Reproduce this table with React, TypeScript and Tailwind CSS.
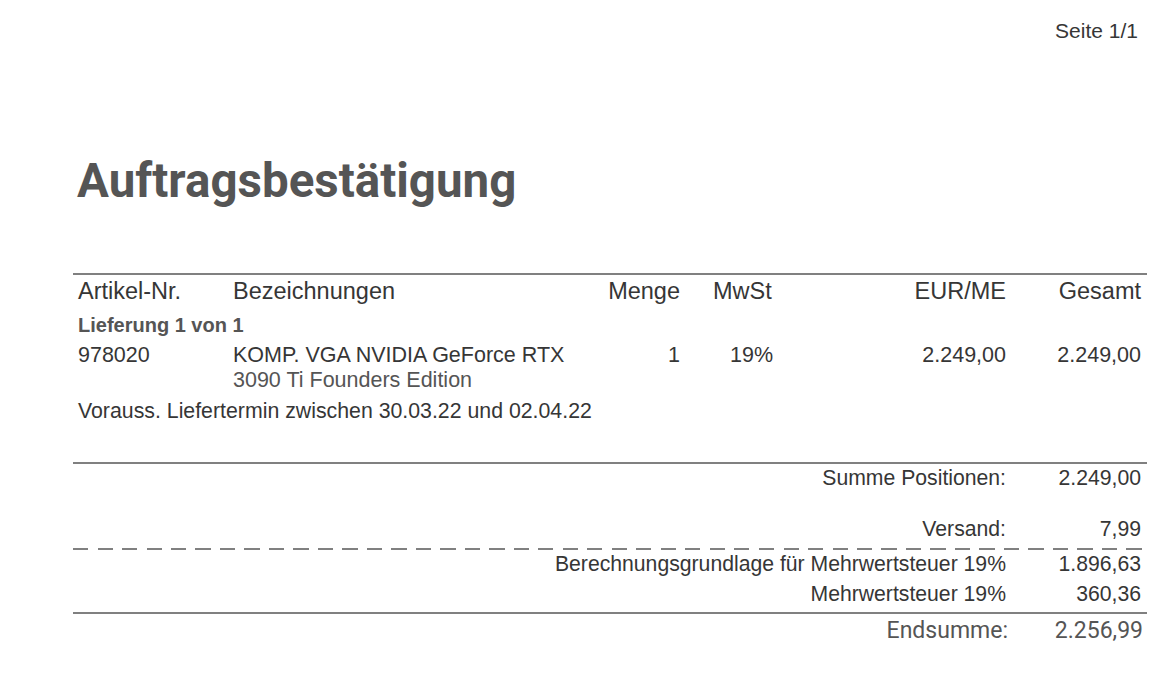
const cols = 'grid grid-cols-[155px_340px_107px_100px_226px_135px]';

function TotalRow({ label, value, className = '' }: { label: string; value: string; className?: string }) {
  return (
    <div className={`flex justify-end pr-[6px] ${className}`}>
      <span className="text-right">{label}</span>
      <span className="w-[135px] text-right">{value}</span>
    </div>
  );
}

export default function App() {
  return (
    <div className="min-h-screen w-[1165px] bg-white text-[#363636] font-['Liberation_Sans',Arial,sans-serif]">
      <div className="flex justify-end pr-[27px] pt-[19px] text-[21px] leading-[24px]">Seite 1/1</div>

      <h1 className="ml-[77px] mt-[110px] font-['Roboto',sans-serif] text-[47.5px] font-bold leading-[56px] text-[#555]">
        Auftragsbestätigung
      </h1>

      <div className="ml-[73px] mt-[64px] w-[1074px]">
        <div className="h-[2px] bg-[#808080]" />

        {/* header */}
        <div className={`${cols} pl-[5px] pt-[3px] text-[23.5px] leading-[26px]`}>
          <span>Artikel-Nr.</span>
          <span>Bezeichnungen</span>
          <span className="text-right">Menge</span>
          <span>
            <span className="pl-[33px]">MwSt</span>
          </span>
          <span className="text-right">EUR/ME</span>
          <span className="text-right">Gesamt</span>
        </div>

        <div className="pl-[5px] mt-[9px] text-[20px] leading-[24px] font-bold text-[#555]">
          Lieferung 1 von 1
        </div>

        {/* item */}
        <div className={`${cols} pl-[5px] mt-[6px] text-[21.5px] leading-[25px]`}>
          <span>978020</span>
          <span className="whitespace-nowrap">
            KOMP. VGA NVIDIA GeForce RTX
            <br />
            <span className="text-[#555]">3090 Ti Founders Edition</span>
          </span>
          <span className="text-right">1</span>
          <span className="pl-[50px]">19%</span>
          <span className="text-right">2.249,00</span>
          <span className="text-right">2.249,00</span>
        </div>

        <div className="pl-[5px] mt-[6px] text-[21.3px] leading-[25px]">
          Vorauss. Liefertermin zwischen 30.03.22 und 02.04.22
        </div>

        <div className="mt-[38px] h-[2px] bg-[#808080]" />

        <div className="text-[21.2px] leading-[24px]">
          <TotalRow label="Summe Positionen:" value="2.249,00" className="mt-[2px]" />
          <TotalRow label="Versand:" value="7,99" className="mt-[27px]" />
          <div className="mt-[7px] h-[2px] w-[1076px] bg-[repeating-linear-gradient(to_right,#808080_0_15px,transparent_15px_24.5px)]" />
          <TotalRow label="Berechnungsgrundlage für Mehrwertsteuer 19%" value="1.896,63" className="mt-[2px]" />
          <TotalRow label="Mehrwertsteuer 19%" value="360,36" className="mt-[6px]" />
        </div>

        <div className="mt-[6px] h-[2px] bg-[#808080]" />

        <div className="flex justify-end pr-[4px] pt-[3px] font-['Roboto',sans-serif] text-[23px] leading-[28px] text-[#555]">
          <span>Endsumme:</span>
          <span className="w-[135px] text-right">2.256,99</span>
        </div>
      </div>
    </div>
  );
}
